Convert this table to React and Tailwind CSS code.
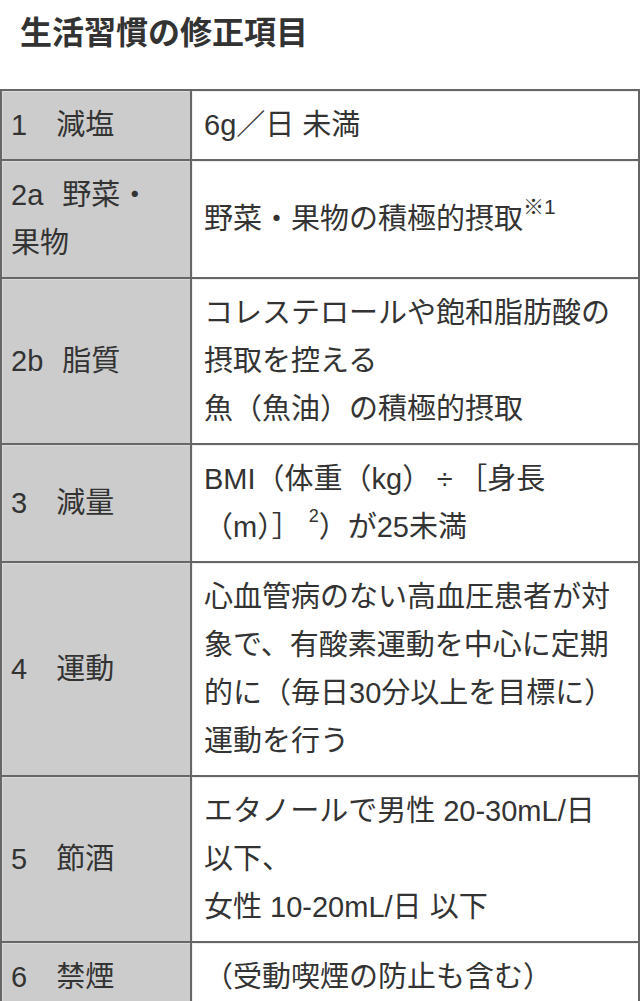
import React from "react";

const rows = [
  { no: "1", label: "減塩", body: <>6g／日 未満</> },
  {
    no: "2a",
    label: "野菜・果物",
    body: (
      <>
        野菜・果物の積極的摂取<sup className="text-[21px] align-[5px] leading-none">※1</sup>
      </>
    ),
  },
  {
    no: "2b",
    label: "脂質",
    body: (
      <>
        コレステロールや飽和脂肪酸の摂取を控える
        <br />
        魚（魚油）の積極的摂取
      </>
    ),
  },
  {
    no: "3",
    label: "減量",
    body: (
      <>
        BMI（体重（kg）<span className="inline-block w-[27px] text-center">÷</span>［身長（m）］
        <sup className="ml-[8px] text-[18px] align-[6px] leading-none">2</sup>）が25未満
      </>
    ),
  },
  {
    no: "4",
    label: "運動",
    body: <>心血管病のない高血圧患者が対象で、有酸素運動を中心に定期的に（毎日30分以上を目標に）運動を行う</>,
  },
  {
    no: "5",
    label: "節酒",
    body: (
      <>
        エタノールで男性 20-30mL/日 以下、
        <br />
        女性 10-20mL/日 以下
      </>
    ),
  },
  { no: "6", label: "禁煙", body: <>（受動喫煙の防止も含む）</> },
];

const App = () => {
  return (
    <div className="min-h-[1001px] bg-white text-[#333] font-['Liberation_Sans','Noto_Sans_CJK_JP',sans-serif]">
      {/* Heading */}
      <h2 className="px-5 pt-[14px] text-[32px] leading-[38px] font-bold">生活習慣の修正項目</h2>

      {/* Table */}
      <div className="mt-[37px] border-t-2 border-x-2 border-[#666]">
        {rows.map((row) => (
          <div key={row.no} className="flex border-b-2 border-[#666]">
            <div className="w-[190px] shrink-0 flex items-center border-r-2 border-[#666] bg-[#cccccc] pl-[9px] pr-[20px] py-[10px] text-[29px] leading-[48px] shadow-[inset_1px_1px_0_0_#dadada]">
              <div>
                {row.no.length > 1 ? (
                  <span className="mr-[19px]">{row.no}</span>
                ) : (
                  <span>{row.no}　</span>
                )}
                {row.label}
              </div>
            </div>
            <div className="flex-1 flex items-center pl-[12px] pr-[12px] py-[10px] text-[29px] leading-[48px] shadow-[inset_1px_1px_0_0_#eeeeee]">
              <div>{row.body}</div>
            </div>
          </div>
        ))}
      </div>
    </div>
  );
};

export default App;
